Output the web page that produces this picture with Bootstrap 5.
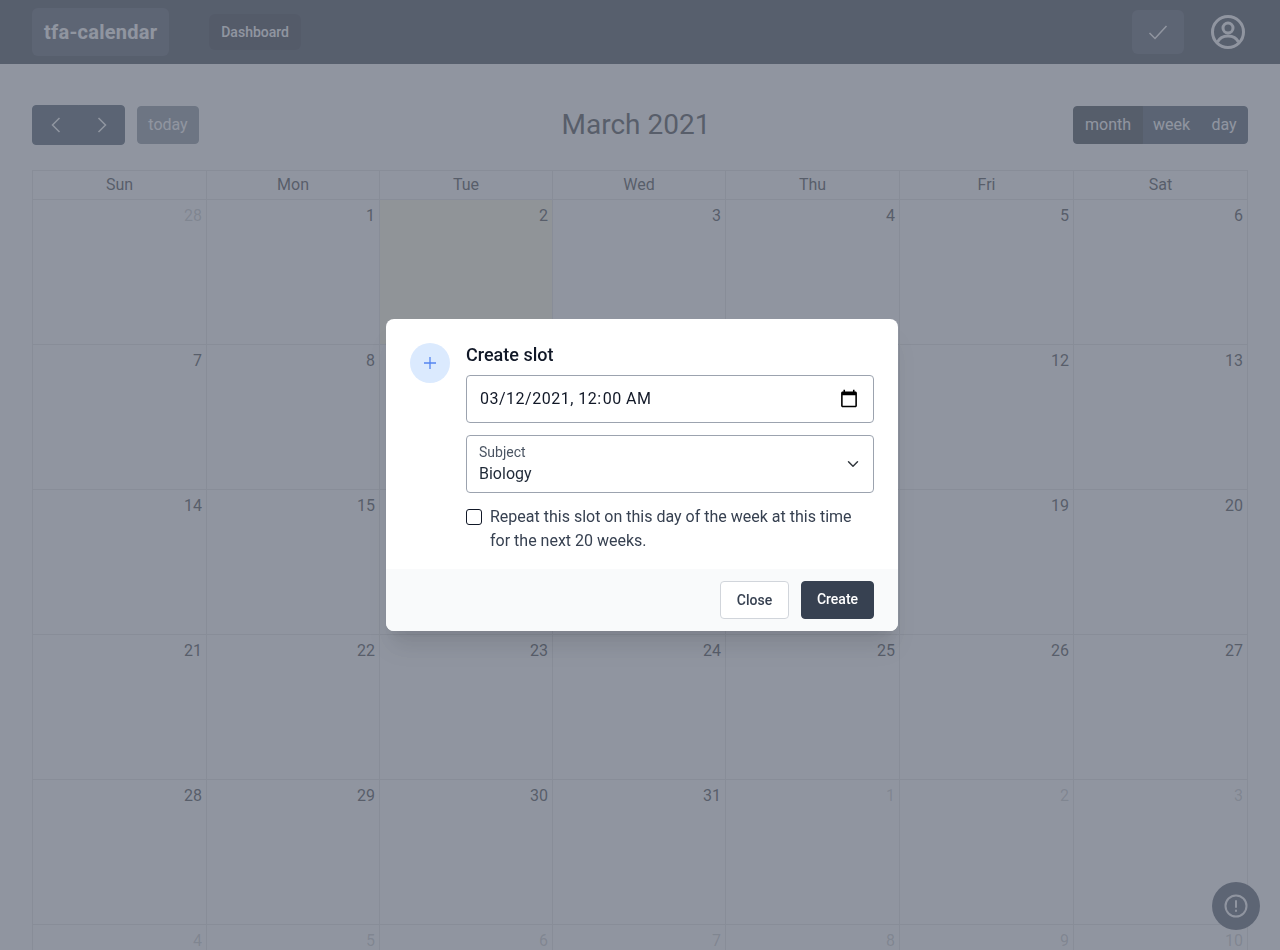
<!DOCTYPE html>
<html lang="en">
<head>
  <meta charset="UTF-8" />
  <meta name="viewport" content="width=device-width, initial-scale=1.0" />
  <title>tfa-calendar</title>

  <link href="https://cdn.jsdelivr.net/npm/bootstrap@5.3.0/dist/css/bootstrap.min.css" rel="stylesheet" />

  <style>
    html, body { height: 100%; overflow: hidden; }
    body { font-family: Roboto, "Liberation Sans", sans-serif; color: #212529; background: #fff; }

    .top-bar { height: 64px; background: #1f2937; padding: 0 32px; }
    .top-brand { padding: 8px 12px; height: 48px; line-height: 32px; font-size: 20px; font-weight: 700; letter-spacing: .25px; color: #fff; background: #374151; border-radius: 6px; text-decoration: none; }
    .top-link { margin-left: 40px; height: 36px; line-height: 20px; padding: 8px 12px; font-size: 14px; font-weight: 500; color: #fff; background: #111827; border-radius: 6px; text-decoration: none; }
    .check-btn { width: 52px; height: 44px; background: #374151; border-radius: 6px; border: 0; padding: 0; }
    .profile-btn { margin-left: 27px; margin-right: 3px; background: none; border: 0; padding: 0; line-height: 0; }

    .cal-wrap { padding: 41px 32px 0; }
    .cal-toolbar { height: 40px; margin-bottom: 25px; }
    .cal-title { font-size: 28px; font-weight: 400; line-height: 40px; margin: 0; }
    .cal-btn { --bs-btn-color: #fff; --bs-btn-bg: #2c3e50; --bs-btn-border-color: #2c3e50; --bs-btn-border-radius: 4px; --bs-btn-hover-color: #fff; --bs-btn-hover-bg: #1e2b37; --bs-btn-active-bg: #1a252f; --bs-btn-active-border-color: #1a252f; --bs-btn-active-color: #fff; --bs-btn-disabled-color: #fff; --bs-btn-disabled-bg: #2c3e50; --bs-btn-disabled-border-color: #2c3e50; --bs-btn-disabled-opacity: .65; }
    .nav-arrow { width: 47px; height: 40px; padding: 0; line-height: 0; }
    .today-btn { margin-left: 12px; width: 62px; padding-left: 0; padding-right: 0; }
    .view-month { width: 70px; }
    .view-week { width: 59px; }
    .view-day { width: 48px; }

    .cal-table { width: 1216px; table-layout: fixed; border-collapse: collapse; }
    .cal-table th, .cal-table td { border: 1px solid #ddd; padding: 0; }
    .cal-table th { height: 29px; text-align: center; font-weight: 400; line-height: 24px; }
    .cal-table td { height: 145px; vertical-align: top; text-align: right; padding: 4px; line-height: 24px; }
    .cal-table td.is-today { background: rgba(255, 220, 40, .15); }
    .cal-table td.is-other { color: rgba(33, 37, 41, .3); }
    .col-w1 { width: 174px; }
    .col-w2 { width: 173px; }

    .help-btn { position: fixed; right: 20px; bottom: 20px; width: 48px; height: 48px; border-radius: 50%; background: #374151; border: 0; padding: 0; line-height: 0; }

    .dim-layer { position: fixed; inset: 0; z-index: 1040; background: rgba(107, 114, 128, .75); }
    .slot-dialog { position: fixed; z-index: 1050; left: 386px; top: 319px; width: 512px; background: #fff; border-radius: 8px; overflow: hidden; box-shadow: 0 20px 25px -5px rgba(0,0,0,.1), 0 10px 10px -5px rgba(0,0,0,.04); }
    .slot-body { padding: 24px 24px 16px; }
    .slot-icon { width: 40px; height: 40px; border-radius: 50%; background: #dbeafe; margin-right: 16px; }
    .slot-title { font-size: 18px; font-weight: 500; line-height: 24px; color: #111827; margin: 0 0 8px; }
    .slot-input { height: 48px; padding: 8px 14px 8px 13px; font-size: 16px; color: #111827; border: 1px solid #9ca3af; border-radius: 4px; letter-spacing: .5px; }
    .slot-input::-webkit-calendar-picker-indicator { width: 20px; height: 20px; margin-left: 0; padding: 0; }
    .slot-floating { margin-top: 12px; }
    .slot-floating > .form-select { height: 58px; min-height: 58px; padding: 26px 12px 6px; line-height: 24px; font-size: 16px; color: #1f2937; border: 1px solid #9ca3af; border-radius: 4px; background-position: right 12px center; }
    .slot-floating > label { padding: 8px 13px; font-size: 14px; line-height: 18px; height: auto; border: 0; color: #4b5563; }
    .slot-floating > .form-select ~ label { transform: none; opacity: 1; color: #4b5563; }
    .slot-check { display: flex; margin: 12px 0 0; padding: 0; min-height: 0; }
    .slot-check .form-check-input { float: none; width: 16px; height: 16px; margin: 4px 8px 0 0; flex: none; border: 1px solid #111827; border-radius: 3px; }
    .slot-check .form-check-label { line-height: 24px; color: #374151; }
    .slot-foot { height: 62px; background: #f9fafb; padding: 0 24px; gap: 12px; }
    .slot-close { height: 38px; width: 69px; padding: 0; font-size: 14px; font-weight: 500; background: #fff; color: #374151; border: 1px solid #d1d5db; border-radius: 4px; }
    .slot-create { height: 38px; width: 73px; padding: 0 0 2px; font-size: 14px; font-weight: 500; background: #374151; color: #fff; border: 1px solid #374151; border-radius: 4px; }
  </style>
</head>
<body>

  <!-- Navbar -->
  <div class="top-bar d-flex align-items-center">
    <a class="top-brand" href="#">tfa-calendar</a>
    <a class="top-link" href="#">Dashboard</a>
    <div class="ms-auto d-flex align-items-center">
      <button class="check-btn d-flex align-items-center justify-content-center" type="button" aria-label="Done">
        <svg width="24" height="24" viewBox="0 0 24 24" fill="none" stroke="#fff" stroke-width="1.5"><path d="M3.5 13l5.5 5.5L20.5 6"/></svg>
      </button>
      <button class="profile-btn" type="button" aria-label="Profile">
        <svg width="34" height="34" viewBox="0 0 34 34" fill="none" stroke="#fff" stroke-width="3"><circle cx="17" cy="17" r="15.5"/><circle cx="17" cy="13" r="5"/><path d="M6.5 27c2-4 6-6 10.500-6s8.500 2 10.500 6"/></svg>
      </button>
    </div>
  </div>

  <!-- Calendar -->
  <div class="cal-wrap">
    <div class="cal-toolbar d-flex align-items-center justify-content-between">
      <div class="d-flex align-items-center">
        <div class="btn-group">
          <button class="btn cal-btn nav-arrow" type="button" aria-label="Previous">
            <svg width="12" height="16" viewBox="0 0 12 16" fill="none" stroke="#fff" stroke-width="1.5"><path d="M9.500 1L2.500 8l7 7"/></svg>
          </button>
          <button class="btn cal-btn nav-arrow" type="button" aria-label="Next">
            <svg width="12" height="16" viewBox="0 0 12 16" fill="none" stroke="#fff" stroke-width="1.5"><path d="M2.500 1l7 7-7 7"/></svg>
          </button>
        </div>
        <button class="btn cal-btn today-btn" type="button" disabled>today</button>
      </div>
      <h2 class="cal-title">March 2021</h2>
      <div class="btn-group">
        <button class="btn cal-btn active view-month px-0" type="button">month</button>
        <button class="btn cal-btn view-week px-0" type="button">week</button>
        <button class="btn cal-btn view-day px-0" type="button">day</button>
      </div>
    </div>

    <table class="cal-table">
      <colgroup>
        <col class="col-w1"><col class="col-w2"><col class="col-w2"><col class="col-w2"><col class="col-w1"><col class="col-w1"><col class="col-w1">
      </colgroup>
      <thead>
        <tr><th>Sun</th><th>Mon</th><th>Tue</th><th>Wed</th><th>Thu</th><th>Fri</th><th>Sat</th></tr>
      </thead>
      <tbody>
        <tr><td class="is-other">28</td><td>1</td><td class="is-today">2</td><td>3</td><td>4</td><td>5</td><td>6</td></tr>
        <tr><td>7</td><td>8</td><td>9</td><td>10</td><td>11</td><td>12</td><td>13</td></tr>
        <tr><td>14</td><td>15</td><td>16</td><td>17</td><td>18</td><td>19</td><td>20</td></tr>
        <tr><td>21</td><td>22</td><td>23</td><td>24</td><td>25</td><td>26</td><td>27</td></tr>
        <tr><td>28</td><td>29</td><td>30</td><td>31</td><td class="is-other">1</td><td class="is-other">2</td><td class="is-other">3</td></tr>
        <tr><td class="is-other">4</td><td class="is-other">5</td><td class="is-other">6</td><td class="is-other">7</td><td class="is-other">8</td><td class="is-other">9</td><td class="is-other">10</td></tr>
      </tbody>
    </table>
  </div>

  <button class="help-btn d-flex align-items-center justify-content-center" type="button" aria-label="Feedback">
    <svg width="24" height="24" viewBox="0 0 24 24" fill="none" stroke="#fff" stroke-width="2" stroke-linecap="round"><circle cx="12" cy="12" r="10.500"/><path d="M12 7v6M12 16.500v.5"/></svg>
  </button>

  <div class="dim-layer"></div>

  <!-- Create slot dialog -->
  <div class="slot-dialog">
    <div class="slot-body d-flex">
      <div class="slot-icon d-flex align-items-center justify-content-center flex-shrink-0">
        <svg width="24" height="24" viewBox="0 0 24 24" fill="none" stroke="#2563eb" stroke-width="1.300"><path d="M12 6v12M6 12h12" opacity=".75"/></svg>
      </div>
      <div class="flex-grow-1">
        <h3 class="slot-title">Create slot</h3>
        <input class="form-control slot-input" type="datetime-local" value="2021-03-12T00:00" aria-label="Slot time" />
        <div class="form-floating slot-floating">
          <select class="form-select" id="slotSubject">
            <option selected>Biology</option>
            <option>Chemistry</option>
            <option>Physics</option>
          </select>
          <label for="slotSubject">Subject</label>
        </div>
        <div class="form-check slot-check">
          <input class="form-check-input" type="checkbox" id="slotRepeat" />
          <label class="form-check-label" for="slotRepeat">Repeat this slot on this day of the week at this time for the next 20 weeks.</label>
        </div>
      </div>
    </div>
    <div class="slot-foot d-flex align-items-center justify-content-end">
      <button class="btn slot-close" type="button">Close</button>
      <button class="btn slot-create" type="button">Create</button>
    </div>
  </div>

  <script src="https://cdn.jsdelivr.net/npm/bootstrap@5.3.0/dist/js/bootstrap.bundle.min.js"></script>
</body>
</html>
